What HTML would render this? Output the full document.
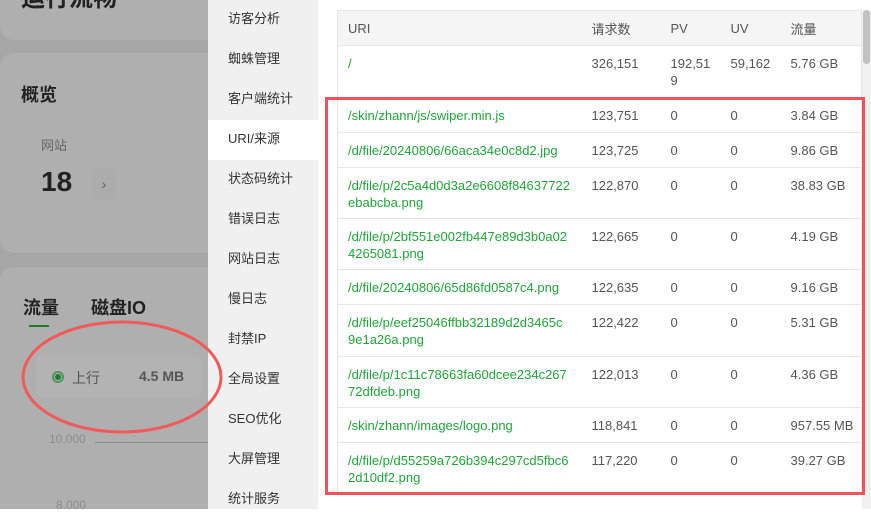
<!DOCTYPE html>
<html><head><meta charset="utf-8"><style>
*{margin:0;padding:0;box-sizing:border-box}
body{width:871px;height:509px;overflow:hidden;position:relative;background:#fff;font-family:"Liberation Sans","Noto Sans CJK SC",sans-serif;color:#333}
.l{position:absolute;left:0;top:0;width:208px;height:509px;background:#a6a6a6;overflow:hidden}
.card{position:absolute;left:0;width:260px;background:#afafaf;border-radius:14px}
.t{position:absolute;white-space:nowrap}
.side{position:absolute;left:208px;top:0;width:110px;height:509px;background:#f0f0f0}
.side div{height:40px;line-height:38px;padding-left:20px;font-size:13px;color:#333}
.side .a{background:#fff}
table{position:absolute;left:337px;top:10px;width:525px;border-collapse:collapse;font-size:13px;border:1px solid #e6e6e6}
th{background:#f5f5f5;font-weight:normal;text-align:left;height:35px;color:#555;padding-left:10px}
td{border-top:1px solid #e6e6e6;vertical-align:top;padding:9px 0 0 10px;color:#555;line-height:17px}
td.u{color:#20a53a;word-break:break-all}
</style></head><body>
<div class="l">
 <div class="card" style="top:-30px;height:70px"></div>
 <div class="t" style="left:21px;top:-22px;font-size:24px;font-weight:bold;color:#222">运行流畅</div>
 <div class="card" style="top:53px;height:200px"></div>
 <div class="t" style="left:21px;top:81px;font-size:18px;font-weight:bold;color:#222">概览</div>
 <div class="t" style="left:41px;top:135px;font-size:13px;color:#666">网站</div>
 <div class="t" style="left:41px;top:166px;font-size:28px;font-weight:bold;color:#222">18</div>
 <div class="t" style="left:92px;top:168px;width:24px;height:32px;background:#acacac;border-radius:4px;color:#666;text-align:center;line-height:32px;font-size:14px">›</div>
 <div class="card" style="top:267px;height:260px"></div>
 <div class="t" style="left:23px;top:294px;font-size:18px;font-weight:bold;color:#222">流量</div>
 <div class="t" style="left:91px;top:294px;font-size:18px;font-weight:bold;color:#222">磁盘IO</div>
 <div class="t" style="left:29px;top:325px;width:20px;height:2px;background:#1e7a2e"></div>
 <div class="t" style="left:36px;top:355px;width:165px;height:43px;background:#b3b3b3;border-radius:8px"></div>
 <div class="t" style="left:52px;top:371px;width:12px;height:12px;border-radius:50%;border:2px solid #4c9a5a;background:#afafaf"></div>
 <div class="t" style="left:55px;top:374px;width:6px;height:6px;border-radius:50%;background:#1e7a2e"></div>
 <div class="t" style="left:72px;top:368px;font-size:14px;color:#555">上行</div>
 <div class="t" style="left:139px;top:368px;font-size:14px;font-weight:bold;color:#555">4.5 MB</div>
 <div class="t" style="left:49px;top:432px;font-size:12px;color:#8c8c8c">10,000</div>
 <div class="t" style="left:95px;top:442px;width:120px;height:1px;background:#8f8f8f"></div>
 <div class="t" style="left:56px;top:498px;font-size:12px;color:#8c8c8c">8,000</div>
</div>
<div class="side">
<div>访客分析</div><div>蜘蛛管理</div><div>客户端统计</div><div class="a">URI/来源</div><div>状态码统计</div><div>错误日志</div><div>网站日志</div><div>慢日志</div><div>封禁IP</div><div>全局设置</div><div>SEO优化</div><div>大屏管理</div><div>统计服务</div>
</div>
<table>
<tr><th style="width:244px">URI</th><th style="width:79px">请求数</th><th style="width:60px">PV</th><th style="width:60px">UV</th><th>流量</th></tr>
<tr style="height:52px"><td class="u">/</td><td>326,151</td><td>192,51<br>9</td><td>59,162</td><td>5.76 GB</td></tr>
<tr style="height:35px"><td class="u">/skin/zhann/js/swiper.min.js</td><td>123,751</td><td>0</td><td>0</td><td>3.84 GB</td></tr>
<tr style="height:35px"><td class="u">/d/file/20240806/66aca34e0c8d2.jpg</td><td>123,725</td><td>0</td><td>0</td><td>9.86 GB</td></tr>
<tr style="height:51px"><td class="u">/d/file/p/2c5a4d0d3a2e6608f84637722<br>ebabcba.png</td><td>122,870</td><td>0</td><td>0</td><td>38.83 GB</td></tr>
<tr style="height:51px"><td class="u">/d/file/p/2bf551e002fb447e89d3b0a02<br>4265081.png</td><td>122,665</td><td>0</td><td>0</td><td>4.19 GB</td></tr>
<tr style="height:35px"><td class="u">/d/file/20240806/65d86fd0587c4.png</td><td>122,635</td><td>0</td><td>0</td><td>9.16 GB</td></tr>
<tr style="height:52px"><td class="u">/d/file/p/eef25046ffbb32189d2d3465c<br>9e1a26a.png</td><td>122,422</td><td>0</td><td>0</td><td>5.31 GB</td></tr>
<tr style="height:51px"><td class="u">/d/file/p/1c11c78663fa60dcee234c267<br>72dfdeb.png</td><td>122,013</td><td>0</td><td>0</td><td>4.36 GB</td></tr>
<tr style="height:35px"><td class="u">/skin/zhann/images/logo.png</td><td>118,841</td><td>0</td><td>0</td><td>957.55 MB</td></tr>
<tr style="height:52px"><td class="u">/d/file/p/d55259a726b394c297cd5fbc6<br>2d10df2.png</td><td>117,220</td><td>0</td><td>0</td><td>39.27 GB</td></tr>
</table>
<div style="position:absolute;left:862px;top:10px;width:9px;height:499px;background:#f1f1f1"></div>
<div style="position:absolute;left:863px;top:10px;width:7px;height:54px;background:#c1c1c1;border-radius:4px"></div>
<div style="position:absolute;left:325px;top:97px;width:540px;height:398px;border:3px solid #f0525a"></div>
<svg style="position:absolute;left:0;top:0" width="871" height="509"><ellipse cx="122" cy="377" rx="99" ry="55" fill="none" stroke="#f25a5a" stroke-width="3"/></svg>
</body></html>
